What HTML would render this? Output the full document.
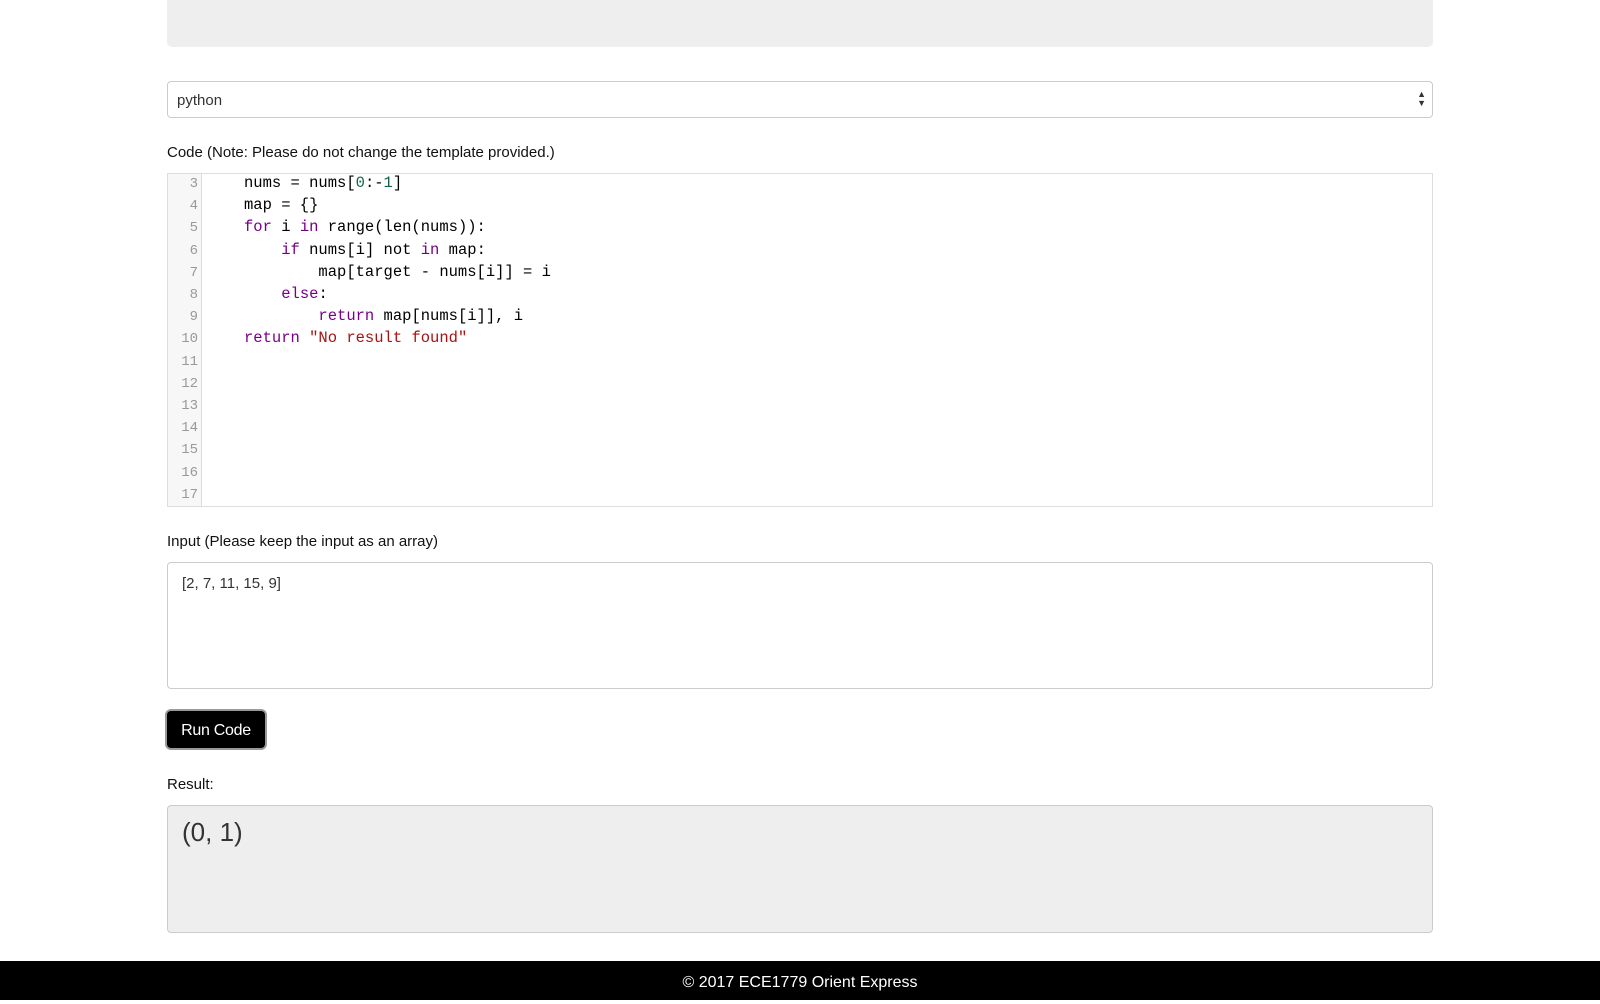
<!DOCTYPE html>
<html><head><meta charset="utf-8"><style>
body{margin:0;width:1600px;height:1000px;background:#fff;font-family:"Liberation Sans",sans-serif;font-size:15px;color:#111;position:relative;overflow:hidden}
.a{position:absolute;left:167px;width:1266px;box-sizing:border-box}
.top{top:0;height:47px;background:#eee;border-radius:0 0 5px 5px}
.sel{top:81px;height:37px;border:1px solid #ccc;border-radius:4px;padding:10px 9px 6px;color:#333}
.lbl{font-size:15px;color:#111}
.code{top:173px;height:334px;border:1px solid #ddd;background:#fff}
.gut{position:absolute;left:0;top:0;bottom:0;width:33px;background:#f7f7f7;border-right:1px solid #ddd}
.ln{position:absolute;left:0;width:30px;text-align:right;font-family:"Liberation Mono",monospace;font-size:14px;color:#999}
.cl{position:absolute;left:76px;font-family:"Liberation Mono",monospace;font-size:15.5px;color:#000;white-space:pre}
.k{color:#708}.n{color:#164}.s{color:#a11}
.ta{border:1px solid #ccc;border-radius:4px;padding:12px 14px 8px;color:#333}
.btn{position:absolute;left:167px;top:711px;width:98px;height:37px;background:#000;color:#fff;border-radius:4px;box-shadow:0 0 0 2px #999;font-size:16px;line-height:39px;text-align:center;letter-spacing:-0.3px}
.foot{position:absolute;left:0;right:0;top:961px;height:39px;background:#000;color:#fff;text-align:center;line-height:43px;font-size:16px}
</style></head><body>
<div class="a top"></div>
<div class="a sel">python<span style="position:absolute;right:6px;top:8px;font-size:9px;line-height:9px;color:#333">▲<br>▼</span></div>
<div class="a lbl" style="top:144px">Code (Note: Please do not change the template provided.)</div>
<div class="a code"><div class="gut"></div>
<div class="ln" style="top:-1px;line-height:22.2px">3<br>4<br>5<br>6<br>7<br>8<br>9<br>10<br>11<br>12<br>13<br>14<br>15<br>16<br>17</div>
<div class="cl" style="top:-2px;left:76px;line-height:22.2px">nums = nums[<span class="n">0</span>:-<span class="n">1</span>]
map = {}
<span class="k">for</span> i <span class="k">in</span> range(len(nums)):
    <span class="k">if</span> nums[i] not <span class="k">in</span> map:
        map[target - nums[i]] = i
    <span class="k">else</span>:
        <span class="k">return</span> map[nums[i]], i
<span class="k">return</span> <span class="s">"No result found"</span></div>
</div>
<div class="a lbl" style="top:533px">Input (Please keep the input as an array)</div>
<div class="a ta" style="top:562px;height:127px">[2, 7, 11, 15, 9]</div>
<div class="btn">Run Code</div>
<div class="a lbl" style="top:776px">Result:</div>
<div class="a ta" style="top:805px;height:128px;background:#eee;font-size:26px;padding:11px 14px">(0, 1)</div>
<div class="foot">© 2017 ECE1779 Orient Express</div>
</body></html>
